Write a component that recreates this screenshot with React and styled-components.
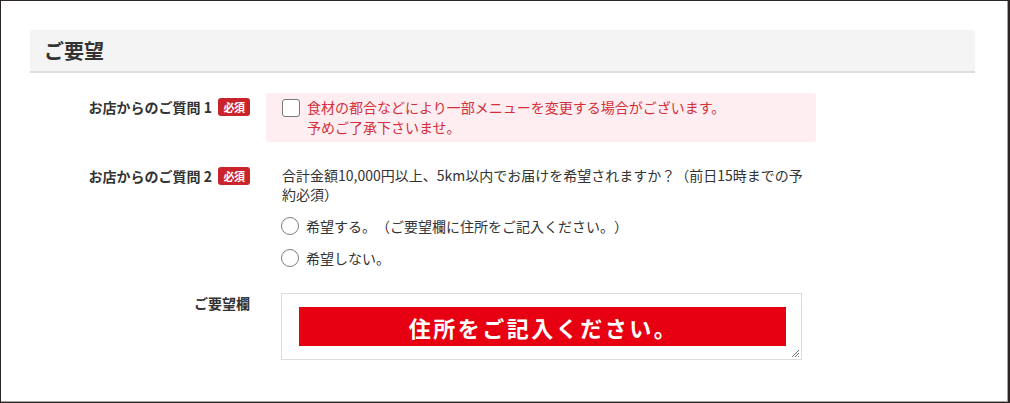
import React from "react";
import styled, { createGlobalStyle } from "styled-components";

const Global = createGlobalStyle`
  html, body { margin: 0; padding: 0; background: #fff; }
  body {
    font-family: "Noto Sans CJK JP", "Noto Sans", sans-serif;
    color: #333;
    text-spacing-trim: space-all;
  }
  * { box-sizing: border-box; }
`;

const Frame = styled.div`
  width: 1010px;
  height: 403px;
  border-top: 1px solid #2b2526;
  border-left: 1px solid #2b2526;
  border-bottom: 1px solid #2b2526;
  border-right: 2px solid #2b2526;
  box-shadow: inset -1px -1px 0 #a3a3a3;
  padding: 29px 0 0 29px;
  overflow: hidden;
`;

const Section = styled.section`
  width: 945px;
`;

const Header = styled.h2`
  margin: 0;
  height: 43px;
  background: #f4f4f4;
  border-bottom: 2px solid #dedede;
  border-radius: 2px 2px 0 0;
  padding-left: 14px;
  display: flex;
  align-items: center;
  font-size: 20px;
  font-weight: 700;
  color: #333;
`;

const Rows = styled.div`
  display: flex;
  flex-direction: column;
  gap: 24px;
  margin-top: 20px;
`;

const Row = styled.div`
  display: grid;
  grid-template-columns: 220px 550px;
  column-gap: 16px;
  align-items: start;
  margin-top: ${(p) => p.$shift || 0}px;
`;

const Label = styled.div`
  display: flex;
  justify-content: flex-end;
  align-items: center;
  gap: 6px;
  height: ${(p) => p.$h || 20}px;
  margin-top: ${(p) => p.$top || 0}px;
  font-size: 14px;
  font-weight: 700;
  line-height: 20px;
  color: #333;
  white-space: nowrap;
`;

const Badge = styled.span`
  display: inline-flex;
  align-items: center;
  justify-content: center;
  width: 32px;
  height: 18px;
  border-radius: 3px;
  background: #c9232b;
  color: #fff;
  font-size: 11px;
  font-weight: 700;
  line-height: 1;
  letter-spacing: -0.5px;
`;

const Notice = styled.div`
  background: #feeef1;
  border-radius: 3px;
  padding: 4px 16px 5px 16px;
  display: flex;
  gap: 7px;
  align-items: flex-start;
`;

const CheckBox = styled.span`
  flex: none;
  width: 18px;
  height: 18px;
  margin-top: 2px;
  border: 1px solid #7a7a7a;
  border-radius: 3px;
  background: #fff;
`;

const NoticeText = styled.p`
  margin: 0;
  font-size: 14px;
  line-height: 20px;
  color: #d42f3a;
`;

const Question = styled.div`
  padding-left: 16px;
  width: 544px;
`;

const QText = styled.p`
  margin: 0;
  font-size: 14px;
  line-height: 19px;
  color: #333;
`;

const Options = styled.div`
  display: flex;
  flex-direction: column;
  gap: 12px;
  margin-top: 12px;
  margin-left: -1px;
`;

const Option = styled.label`
  display: flex;
  align-items: center;
  gap: 7px;
  height: 20px;
  font-size: 14px;
  color: #333;
`;

const Radio = styled.span`
  flex: none;
  width: 18px;
  height: 18px;
  border: 1.5px solid #7d7d7d;
  border-radius: 50%;
  background: #fff;
`;

const TextArea = styled.div`
  position: relative;
  margin-left: 15px;
  width: 521px;
  height: 67px;
  border: 1px solid #dcdcdc;
  padding: 13px 0 0 17px;
  background: #fff;
`;

const Banner = styled.div`
  width: 487px;
  height: 39px;
  background: #e60012;
  color: #fff;
  display: flex;
  align-items: center;
  justify-content: center;
  font-size: 22px;
  font-weight: 700;
  letter-spacing: 2.5px;
  padding-left: 2px;
`;

const Grip = styled.svg`
  position: absolute;
  right: 1px;
  bottom: 1px;
`;

export default function App() {
  return (
    <>
      <Global />
      <Frame>
        <Section>
          <Header>ご要望</Header>
          <Rows>
            <Row>
              <Label $top={4}>
                お店からのご質問 1<Badge>必須</Badge>
              </Label>
              <Notice>
                <CheckBox />
                <NoticeText>
                  食材の都合などにより一部メニューを変更する場合がございます。
                  <br />
                  予めご了承下さいませ。
                </NoticeText>
              </Notice>
            </Row>
            <Row>
              <Label>
                お店からのご質問 2<Badge>必須</Badge>
              </Label>
              <Question>
                <QText>
                  合計金額10,000円以上、5km以内でお届けを希望されますか？（前日15時までの予約必須）
                </QText>
                <Options>
                  <Option>
                    <Radio />
                    希望する。（ご要望欄に住所をご記入ください。）
                  </Option>
                  <Option>
                    <Radio />
                    希望しない。
                  </Option>
                </Options>
              </Question>
            </Row>
            <Row $shift={1}>
              <Label $h={18} $top={1}>ご要望欄</Label>
              <TextArea>
                <Banner>住所をご記入ください。</Banner>
                <Grip width="10" height="10" viewBox="0 0 10 10">
                  <path d="M9 2 L2 9 M9 5 L5 9 M9 8 L8 9" stroke="#777" strokeWidth="1" fill="none" />
                </Grip>
              </TextArea>
            </Row>
          </Rows>
        </Section>
      </Frame>
    </>
  );
}
